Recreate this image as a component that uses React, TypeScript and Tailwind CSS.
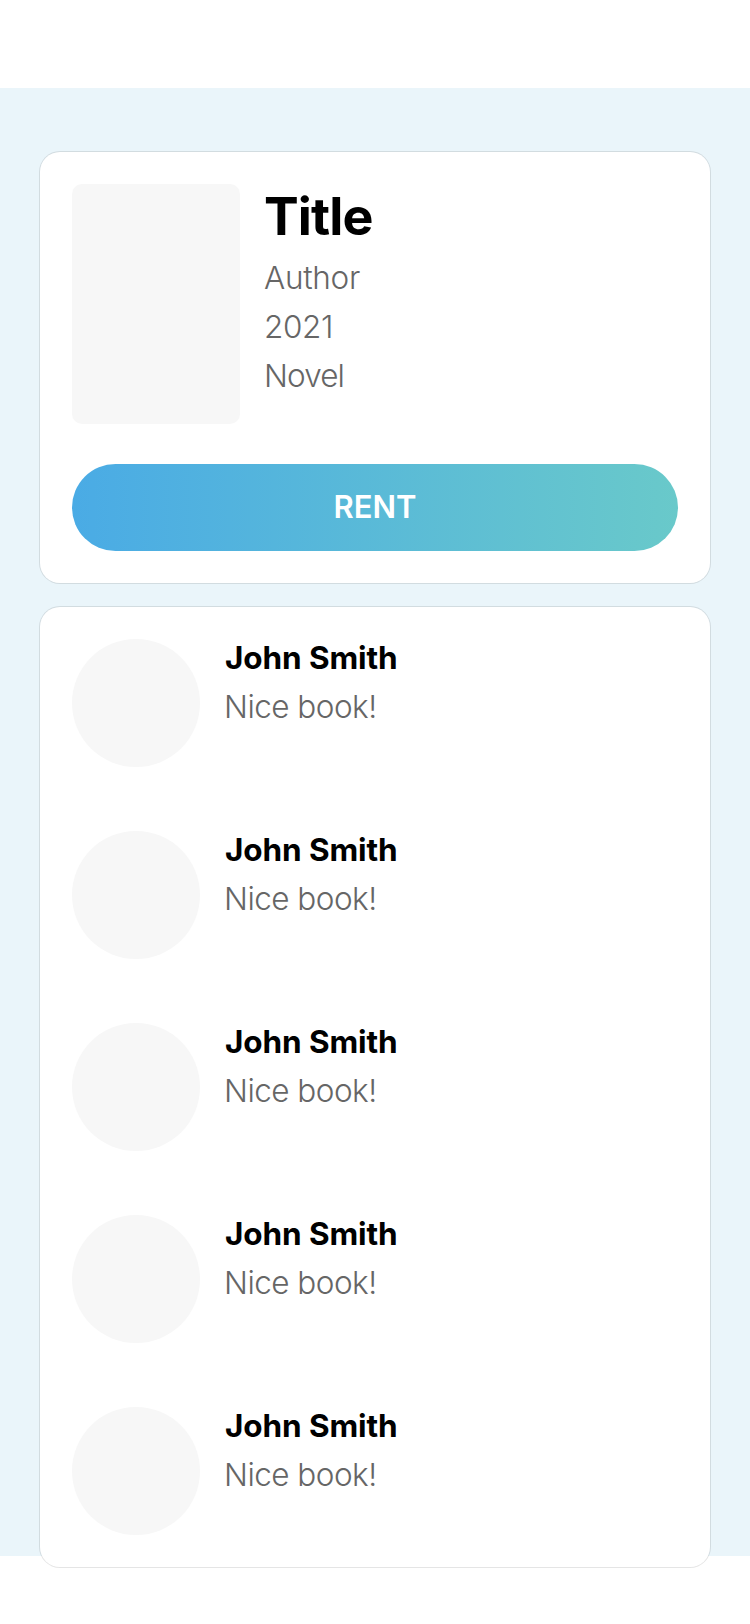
const comments = [
  { author: 'John Smith', text: 'Nice book!' },
  { author: 'John Smith', text: 'Nice book!' },
  { author: 'John Smith', text: 'Nice book!' },
  { author: 'John Smith', text: 'Nice book!' },
  { author: 'John Smith', text: 'Nice book!' },
];

const card = 'rounded-[20px] bg-white p-8 shadow-[0_0_0_1px_rgba(0,0,0,0.1)]';
const detail = 'text-[31.5px] leading-[37px] font-light text-[#666666]';

function BookCard() {
  return (
    <section className={card}>
      <div className="flex gap-6">
        <div className="h-60 w-42 shrink-0 rounded-[10px] bg-[#f7f7f7]" />
        <div className="flex flex-col">
          <h1 className="pt-px text-[52px] leading-[64px] font-bold tracking-[-0.9px]">Title</h1>
          <div className="mt-2.5 flex flex-col gap-3">
            <p className={`${detail} tracking-[-0.3px]`}>Author</p>
            <p className={`${detail} tracking-[-0.4px]`}>2021</p>
            <p className={`${detail} tracking-[-0.9px]`}>Novel</p>
          </div>
        </div>
      </div>
      <button className="mt-10 flex h-[87px] w-full items-center justify-center rounded-full bg-[linear-gradient(90deg,#4aabe5,#69c9ca)] pb-0.5 text-[31px] leading-[37px] font-semibold text-white">
        RENT
      </button>
    </section>
  );
}

function Comments() {
  return (
    <section className={`${card} flex flex-col gap-16`}>
      {comments.map((comment, index) => (
        <article key={index} className="flex gap-6">
          <div className="size-32 shrink-0 rounded-full bg-[#f7f7f7]" />
          <div className="flex flex-col gap-3">
            <h2 className="pl-px text-[31.5px] leading-[37px] font-bold tracking-[-0.1px]">{comment.author}</h2>
            <p className={`${detail} tracking-[-0.53px]`}>{comment.text}</p>
          </div>
        </article>
      ))}
    </section>
  );
}

export default function App() {
  return (
    <div className="h-[1624px] overflow-hidden bg-white pt-22 font-['Inter',sans-serif] text-black">
      <main className="flex h-[1468px] flex-col gap-6 bg-[#eaf5fa] px-10 pt-16">
        <BookCard />
        <Comments />
      </main>
    </div>
  );
}
